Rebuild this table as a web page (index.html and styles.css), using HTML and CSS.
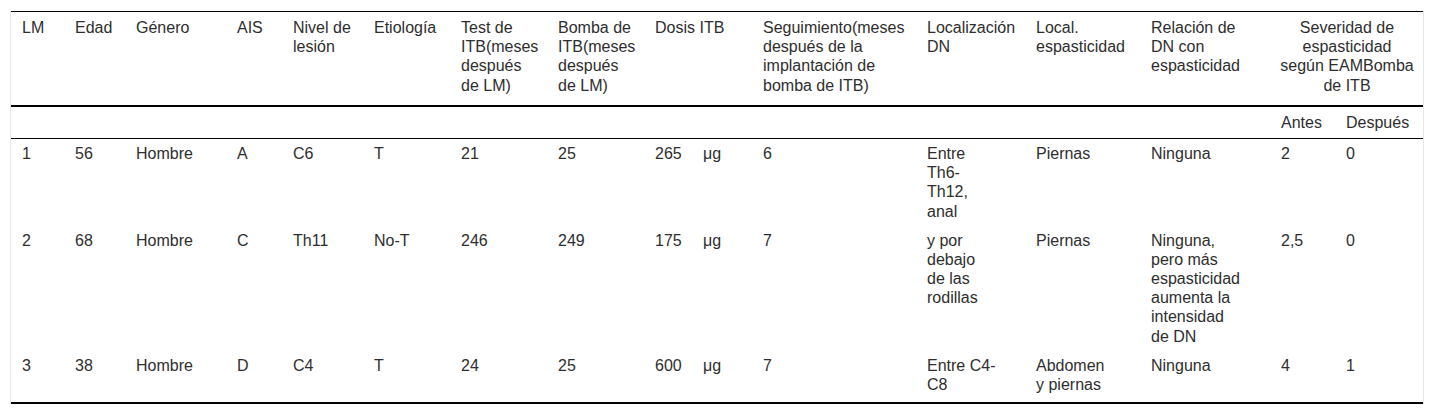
FILE: index.html
```html
<!DOCTYPE html>
<html lang="es">
<head>
<meta charset="utf-8">
<title>Tabla</title>
<link rel="stylesheet" href="styles.css">
</head>
<body>
<div class="wrap">
<table class="data">
<colgroup>
<col class="c-lm"><col class="c-edad"><col class="c-gen"><col class="c-ais"><col class="c-niv"><col class="c-eti"><col class="c-test"><col class="c-bomba"><col class="c-dosis"><col class="c-unit"><col class="c-seg"><col class="c-locdn"><col class="c-locesp"><col class="c-rel"><col class="c-antes"><col class="c-desp">
</colgroup>
<thead>
<tr class="head">
<th>LM</th>
<th>Edad</th>
<th>Género</th>
<th>AIS</th>
<th>Nivel de<br>lesión</th>
<th>Etiología</th>
<th>Test de<br>ITB(meses<br>después<br>de LM)</th>
<th>Bomba de<br>ITB(meses<br>después<br>de LM)</th>
<th colspan="2">Dosis ITB</th>
<th>Seguimiento(meses<br>después de la<br>implantación de<br>bomba de ITB)</th>
<th>Localización<br>DN</th>
<th>Local.<br>espasticidad</th>
<th>Relación de<br>DN con<br>espasticidad</th>
<th colspan="2" class="center">Severidad de<br>espasticidad<br>según EAMBomba<br>de ITB</th>
</tr>
<tr class="sub">
<th></th><th></th><th></th><th></th><th></th><th></th><th></th><th></th><th></th><th></th><th></th><th></th><th></th><th></th>
<th>Antes</th>
<th>Después</th>
</tr>
</thead>
<tbody>
<tr>
<td>1</td><td>56</td><td>Hombre</td><td>A</td><td>C6</td><td>T</td><td>21</td><td>25</td><td>265</td><td class="unit">μg</td><td>6</td>
<td>Entre<br>Th6-<br>Th12,<br>anal</td>
<td>Piernas</td><td>Ninguna</td><td>2</td><td>0</td>
</tr>
<tr>
<td>2</td><td>68</td><td>Hombre</td><td>C</td><td>Th11</td><td>No-T</td><td>246</td><td>249</td><td>175</td><td class="unit">μg</td><td>7</td>
<td>y por<br>debajo<br>de las<br>rodillas</td>
<td>Piernas</td><td>Ninguna,<br>pero más<br>espasticidad<br>aumenta la<br>intensidad<br>de DN</td><td>2,5</td><td>0</td>
</tr>
<tr class="last">
<td>3</td><td>38</td><td>Hombre</td><td>D</td><td>C4</td><td>T</td><td>24</td><td>25</td><td>600</td><td class="unit">μg</td><td>7</td>
<td>Entre C4-<br>C8</td>
<td>Abdomen<br>y piernas</td><td>Ninguna</td><td>4</td><td>1</td>
</tr>
</tbody>
</table>
</div>
</body>
</html>
```

FILE: styles.css
```css
html, body {
  margin: 0;
  padding: 0;
  background: #fff;
}

body {
  font-family: "Liberation Sans", Arial, sans-serif;
  font-size: 16px;
  line-height: 1.2;
  color: #2e2e2e;
}

.wrap {
  margin: 11px 11px 0 10px;
  border-left: 1px solid #e6e6e6;
  border-right: 1px solid #e6e6e6;
  width: 1412px;
}

.data {
  border-collapse: collapse;
  table-layout: fixed;
  width: 1412px;
  border-top: 1px solid #000;
  border-bottom: 2px solid #000;
}

.c-lm { width: 54px; }
.c-edad { width: 61px; }
.c-gen { width: 101px; }
.c-ais { width: 56px; }
.c-niv { width: 81px; }
.c-eti { width: 87px; }
.c-test { width: 97px; }
.c-bomba { width: 97px; }
.c-dosis { width: 48px; }
.c-unit { width: 60px; }
.c-seg { width: 164px; }
.c-locdn { width: 109px; }
.c-locesp { width: 115px; }
.c-rel { width: 130px; }
.c-antes { width: 65px; }
.c-desp { width: 87px; }

.data th,
.data td {
  text-align: left;
  vertical-align: top;
  font-weight: normal;
  white-space: nowrap;
  padding: 5px 0 5px 10px;
}

.data th:first-child,
.data td:first-child {
  padding-left: 11px;
}

.head th {
  padding-top: 6px;
  padding-bottom: 10px;
}

.head {
  border-bottom: 2px solid #000;
}

.data .center {
  text-align: center;
  padding-left: 0;
}

.sub th {
  padding-top: 6px;
  padding-bottom: 6px;
}

.sub {
  border-bottom: 1px solid #000;
}

.data td.unit {
  padding-left: 10px;
}

.last td {
  padding-bottom: 8px;
}
```
